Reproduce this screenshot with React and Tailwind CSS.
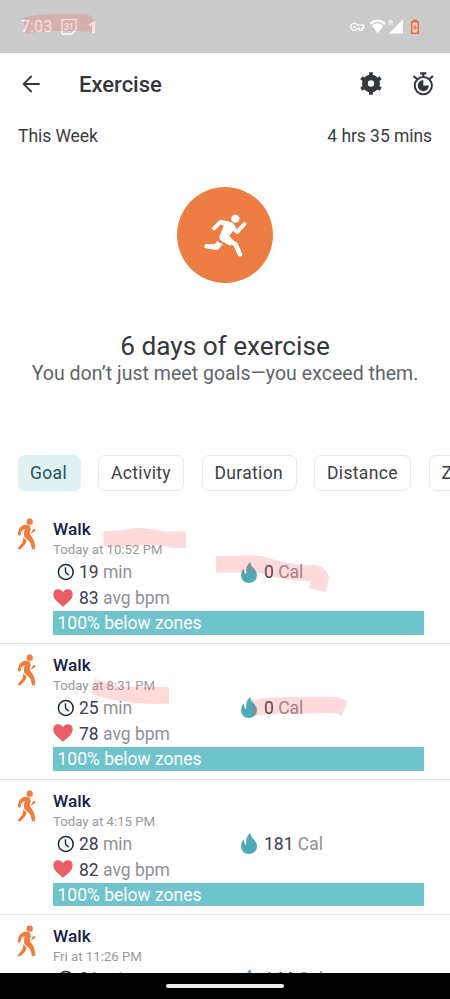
const chips = [
  { label: 'Goal', style: 'w-[63px] bg-[#def1f3] pl-[12.5px] text-[#1f5157]' },
  { label: 'Activity', style: 'w-[86px] border border-[#e6e7e8] pl-[12px] text-[#3c4043]' },
  { label: 'Duration', style: 'w-[95px] border border-[#e6e7e8] pl-[12px] text-[#3c4043]' },
  { label: 'Distance', style: 'w-[97px] border border-[#e6e7e8] pl-[12px] text-[#3c4043]' },
  { label: 'Zone', style: 'w-[70px] border border-[#e6e7e8] pl-[12px] text-[#3c4043]' },
];

const walks = [
  { time: 'Today at 10:52 PM', min: 19, cal: 0, bpm: 83 },
  { time: 'Today at 8:31 PM', min: 25, cal: 0, bpm: 78 },
  { time: 'Today at 4:15 PM', min: 28, cal: 181, bpm: 82 },
  { time: 'Fri at 11:26 PM', min: 21, cal: 144, bpm: 80 },
];

function Runner() {
  return (
    <svg className="h-24 w-24" viewBox="21 21 288 288">
      <circle cx="165" cy="165" r="144" fill="#ed7d42" />
      <g fill="none" stroke="#fff" strokeLinecap="round" strokeLinejoin="round">
        <path d="M132 145L151 126L178 132" strokeWidth="12" />
        <path d="M188 143L202 156L223 132" strokeWidth="12" />
        <path d="M160 172L196 193L210 223" strokeWidth="14" />
      </g>
      <path d="M152 120L183 126Q196 132 196 144L178 167L194 186L180 197L153 182Q145 175 150 165L161 138L151 132Z" fill="#fff" />
      <path d="M142 182Q149 190 159 192L147 206Q144 210 138 210L108 205Q102 203 103 197Q104 192 110 192L134 193Z" fill="#fff" />
      <circle cx="196" cy="116" r="12.5" fill="#fff" />
    </svg>
  );
}

function Walker() {
  return (
    <svg className="h-8 w-[19px]" viewBox="51 39 57 96" fill="#ee7d3e">
      <circle cx="89" cy="50" r="9.5" />
      <path d="M71 59H84Q92 61 92 69L90 87L101 104Q104 112 106 132L96 133Q94 120 90 112L74 97Q70 92 72 85L74 72L65 77L61 91Q54 94 53 87L57 73Q58 69 62 66Z" />
      <path d="M70 97L80 107L77 116L62 133L52 132L68 111Z" />
      <path d="M93 86L98 74L106 71V77Z" />
    </svg>
  );
}

function Clock() {
  return (
    <svg className="h-[18px] w-[18px]" viewBox="0 0 18 18" fill="none" stroke="#15293a">
      <circle cx="8.8" cy="9" r="7.4" strokeWidth="1.5" />
      <path d="M8.5 4.3V9.2L11.7 12.3" strokeWidth="1.4" />
    </svg>
  );
}

function Heart() {
  return (
    <svg className="h-[18px] w-5" viewBox="0 0 60 54" fill="#e85c65">
      <path d="M30 53Q25 48 20 44Q1 30 1 17Q1 1 16 1Q25 1 30 9Q35 1 44 1Q59 1 59 17Q59 30 40 44Q35 48 30 53Z" />
    </svg>
  );
}

function Flame() {
  return (
    <svg className="h-[21px] w-4" viewBox="123 62 48 63" fill="#4dabb7">
      <path d="M150 62Q153 76 163 83Q171 91 171 101Q171 113 163 119Q156 125 147 125Q136 125 129 118Q123 111 123 101Q123 89 131 81Q131 93 137 98Q140 96 139 88Q137 76 150 62Z" />
    </svg>
  );
}

function StatusBar() {
  return (
    <div className="flex h-[53px] shrink-0 items-center bg-[#cbcbcb] pl-[21px] text-white">
      <span className="w-10 text-[16px] leading-5 tracking-[0.1px]">7:03</span>
      <svg className="h-[17px] w-4" viewBox="0 0 16 17" fill="none" stroke="#fff" strokeWidth="1.3">
        <path d="M1 1.5H15V11.5L10.5 16H2Q1 16 1 15Z" />
        <text x="7.8" y="12" textAnchor="middle" fill="#fff" stroke="none" fontSize="9" fontWeight="500">31</text>
      </svg>
      <svg className="ml-[11px] h-[17px] w-[9px]" viewBox="0 0 9 17">
        <path d="M1.3 7.5L7 4" fill="none" stroke="#fff" strokeWidth="2.5" />
        <path d="M4 8L7 5V15H4Z" fill="#fff" />
      </svg>
      <svg className="ml-[252px] h-[19px] w-[74px]" viewBox="349 17 74 19">
        <path
          d="M357.5 25.2H363.5V28.4H362V30.3H359.3V28.4H357.5A3.6 3.6 0 1 1 357.5 25.2Z"
          fill="none"
          stroke="#fff"
          strokeWidth="1.3"
        />
        <path d="M370.3 23.8Q377.7 17.6 385.1 23.8" fill="none" stroke="#fff" strokeWidth="2.2" />
        <circle cx="354.5" cy="27" r="1" fill="#fff" />
        <path d="M371.8 25.6Q377.7 20.8 383.6 25.6L377.7 33.3ZM403 19.5V33.5H389Z" fill="#fff" />
        <text x="388" y="25" fill="#fff" fontSize="8">R</text>
        <path d="M413 19.5H417V21H419V34H411V21H413Z" fill="#ed6a3d" />
        <path d="M412.5 22.5H417.5V32.5H412.5Z" fill="#e3d3cd" />
        <path d="M415 25V30M413 27.5H417" stroke="#ed6a3d" strokeWidth="1.2" />
      </svg>
    </div>
  );
}

function AppBar() {
  return (
    <div className="flex h-[62px] shrink-0 items-center pl-[21px] text-[#34373b]">
      <svg className="h-5 w-5" viewBox="0 0 20 20" fill="none" stroke="currentColor" strokeWidth="1.8">
        <path d="M18.7 10H2.8M10.6 2L2.6 10L10.6 18" />
      </svg>
      <h1 className="ml-[38px] w-[281px] pt-0.5 text-[22px] leading-7 font-medium">Exercise</h1>
      <svg className="h-6 w-[22px]" viewBox="0 0 22 24" fill="none" stroke="currentColor">
        <circle cx="11" cy="11.5" r="6.1" strokeWidth="5.8" />
        <path
          d="M11 .3V5M11 18V22.7M1.3 5.9L5.4 8.3M16.6 14.7L20.7 17.1M1.3 17.1L5.4 14.7M16.6 8.3L20.7 5.9"
          strokeWidth="3.8"
        />
      </svg>
      <svg className="ml-[30px] h-6 w-[22px]" viewBox="0 0 22 24" fill="none" stroke="currentColor">
        <circle cx="11.3" cy="13.6" r="8.6" strokeWidth="2" />
        <path d="M8.2 1.4H14.4M11.3 1.5V5M1.6 4L5 7M21 4L17.6 7" strokeWidth="2.1" />
        <path d="M11.3 8V13.6H16.9A5.6 5.6 0 1 1 11.3 8Z" fill="currentColor" stroke="none" />
      </svg>
    </div>
  );
}

function WalkItem({ walk }) {
  return (
    <li className="flex h-[135.75px] shrink-0 border-b border-[#e4e5e6] pt-[10px] pl-[17px]">
      <Walker />
      <div className="ml-[17px] w-[371px]">
        <div className="h-[22px] text-[17.3px] leading-[23px] font-medium text-[#14224a]">Walk</div>
        <div className="h-5 text-[13.2px] leading-5 text-[#97999e]">{walk.time}</div>
        <div className="flex h-6 items-center pl-1">
          <Clock />
          <div className="ml-[4px] w-[162px] text-[17.5px] leading-6 text-[#8f9196]">
            <span className="text-[#3b4054]">{walk.min}</span> min
          </div>
          <Flame />
          <div className="ml-[7px] text-[17.5px] leading-6 text-[#8f9196]">
            <span className="text-[#3b4054]">{walk.cal}</span> Cal
          </div>
        </div>
        <div className="flex h-[27px] items-center">
          <Heart />
          <div className="ml-[6px] pt-[2px] text-[17.5px] leading-[25px] text-[#8f9196]">
            <span className="text-[#3b4054]">{walk.bpm}</span> avg bpm
          </div>
        </div>
        <div className="h-[23.75px] bg-[#70c4cc] pl-[4.5px] text-[17.5px] leading-[25px] text-white">100% below zones</div>
      </div>
    </li>
  );
}

function Highlights() {
  return (
    <svg className="pointer-events-none absolute inset-0 h-[999px] w-[450px]" viewBox="0 0 450 999" fill="#ff4848" fillOpacity="0.2">
      <path d="M23 18Q36 14 48 14.5H87Q95 16 95 24V33Q80 30 55 31Q38 31 26 34Z" />
      <path d="M103.5 531Q119 531 136 528Q151 528 164 531.5H186V548H172Q159 544 145 545Q130 547 103.5 546.5Z" />
      <path d="M216 556H237Q255 553.5 268 558Q284 563 302 565H315Q325 566 329 576Q329 581 325.5 592L309 588L311 581Q288 581 270 576Q255 571 248 572.5H216Z" />
      <path d="M95 678.5Q112 687 127 687H169V703.5Q125 706 91.5 694Z" />
      <path d="M252 700Q268 697 290 697H337L348 701L341.5 716Q338 713 332 713Q275 713 252 716Z" />
    </svg>
  );
}

export default function App() {
  return (
    <div className="relative flex h-[999px] w-[450px] flex-col overflow-hidden bg-white font-[Roboto,sans-serif]">
      <StatusBar />
      <AppBar />
      <div className="flex h-[42px] shrink-0 items-center justify-between pr-[18px] pl-[18px] text-[17.5px] tracking-[-0.06px] text-[#3a3d41]">
        <span>This Week</span>
        <span>4 hrs 35 mins</span>
      </div>
      <section className="flex h-[298px] shrink-0 flex-col items-center pt-[30px]">
        <Runner />
        <h2 className="mt-[47px] text-[26.2px] leading-8 whitespace-nowrap text-[#34373b]">6 days of exercise</h2>
        <p className="text-[19.5px] leading-6 tracking-[0.03px] whitespace-nowrap text-[#606469]">You don’t just meet goals—you exceed them.</p>
      </section>
      <div className="flex h-[53px] shrink-0 gap-[17.5px] pl-[17.5px]">
        {chips.map((c) => (
          <div key={c.label} className={`flex h-[35.5px] shrink-0 items-center rounded-[7px] text-[17.5px] tracking-[0.33px] ${c.style}`}>
            {c.label}
          </div>
        ))}
      </div>
      <ul className="flex min-h-0 flex-1 flex-col overflow-hidden">
        {walks.map((w) => (
          <WalkItem key={w.time} walk={w} />
        ))}
      </ul>
      <div className="flex h-[26.5px] shrink-0 items-center justify-center bg-black">
        <div className="h-[4.5px] w-[118px] rounded-full bg-[#eeeeee]" />
      </div>
      <Highlights />
    </div>
  );
}
